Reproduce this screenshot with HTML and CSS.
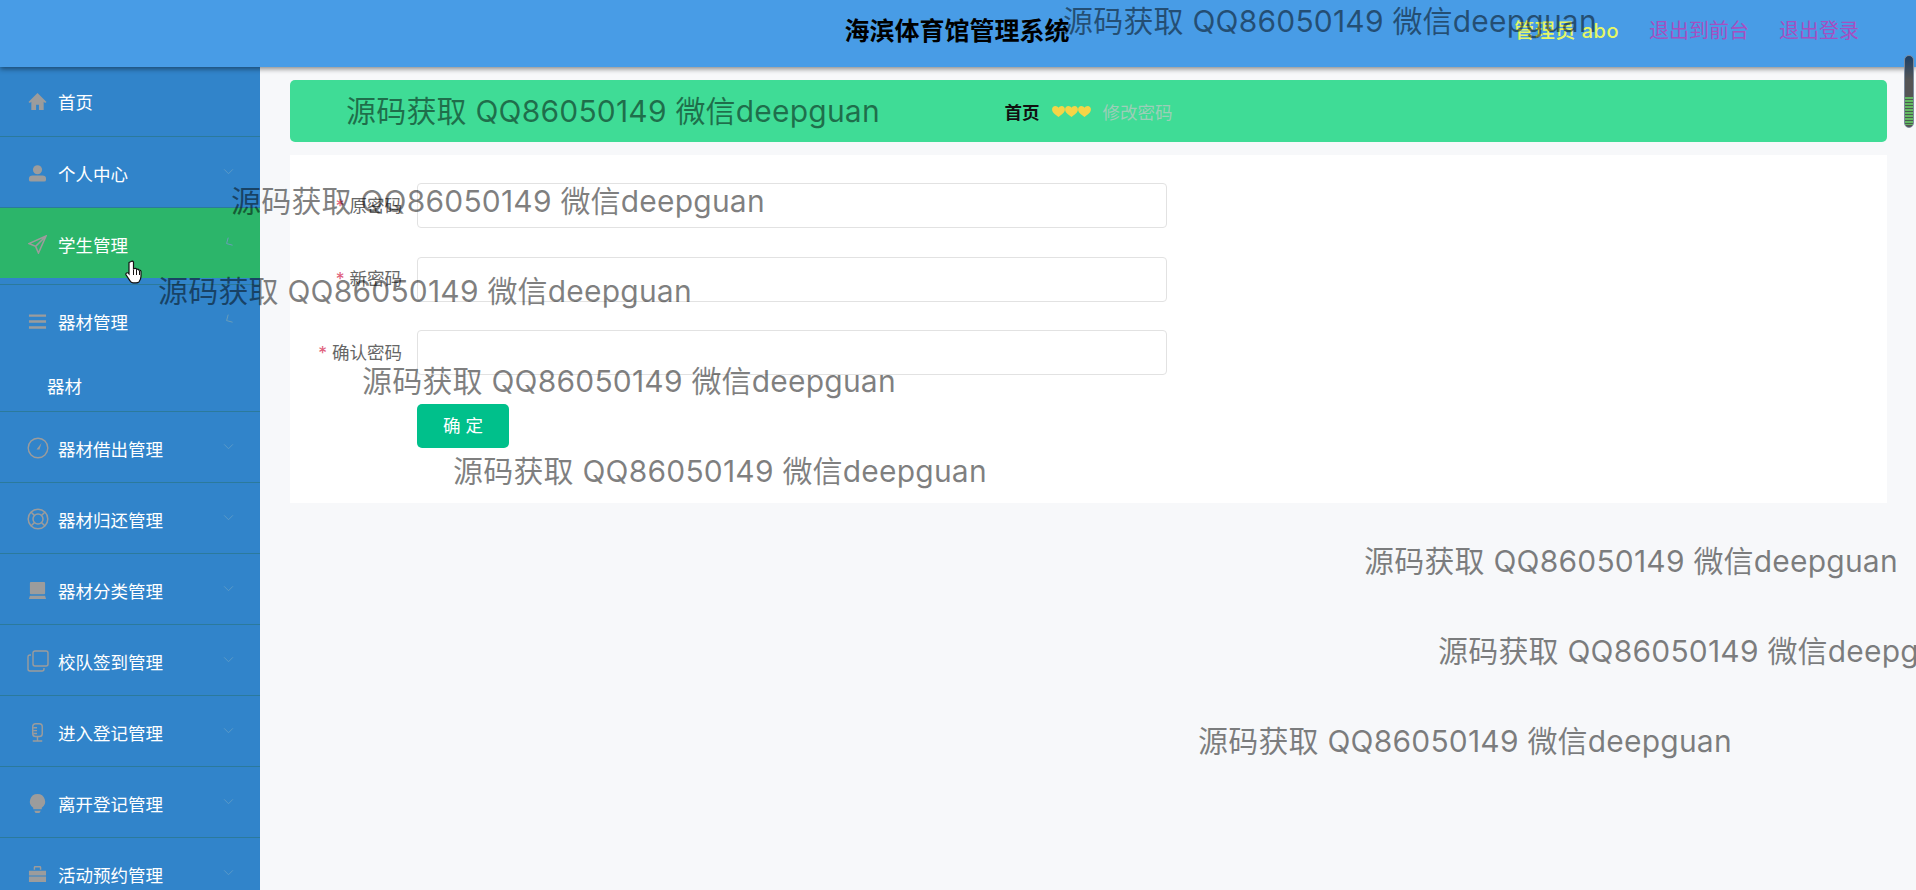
FILE: index.html
```html
<!DOCTYPE html>
<html lang="zh-CN">
<head>
    <meta charset="UTF-8">
    <meta name="viewport" content="width=device-width, initial-scale=1.0">
    <title>海滨体育馆管理系统</title>
    <link rel="stylesheet" href="styles.css">
</head>
<body>
    <svg class="defs" width="0" height="0">
        <symbol id="chev" viewBox="0 0 12 8"><path d="M1 1.500l5 5 5-5" fill="none" stroke="currentColor" stroke-width="1"/></symbol>
        <symbol id="heart" viewBox="0 0 14 12"><path d="M7 12C3 9 0 7 0 3.500 0 1.500 1.500 0 3.500 0 5 0 6.300 .8 7 2c.7-1.200 2-2 3.500-2C12.500 0 14 1.500 14 3.500 14 7 11 9 7 12z"/></symbol>
    </svg>

    <header class="top-bar">
        <div></div>
        <h1 class="app-title">海滨体育馆管理系统</h1>
        <div class="top-links">
            <span class="user">管理员 abo</span>
            <a class="link">退出到前台</a>
            <a class="link">退出登录</a>
        </div>
    </header>

    <div class="layout">
        <nav class="sidebar">
            <div class="menu-item first">
                <svg class="icon" viewBox="0 0 20 20"><path d="M10 1L0.500 10.500l1.500 1 1.500-1.200V19h5v-5.500h3V19h5v-8.700l1.500 1.200 1.500-1z"/></svg>
                <span>首页</span>
            </div>
            <div class="menu-item">
                <svg class="icon" viewBox="0 0 20 20"><circle cx="10" cy="6" r="4.800"/><path d="M1 15.500q0-3.500 4-3.500h10q4 0 4 3.500v1q0 2-2 2H3q-2 0-2-2z"/></svg>
                <span>个人中心</span>
                <svg class="chev"><use href="#chev"/></svg>
            </div>
            <div class="menu-group">
                <div class="menu-item active">
                    <svg class="icon" viewBox="0 0 20 20"><path d="M19 1L1 9l7 3 3 7zM8 12L19 1" fill="none" stroke="currentColor" stroke-width="1.600"/></svg>
                    <span>学生管理</span>
                    <svg class="chev half"><use href="#chev"/></svg>
                </div>
                <div class="menu-gap"></div>
            </div>
            <div class="menu-group">
                <div class="menu-item">
                    <svg class="icon" viewBox="0 0 20 20"><path d="M1 2.500h18v2.500H1zM1 8.800h18v2.500H1zM1 15h18v2.500H1z"/></svg>
                    <span>器材管理</span>
                    <svg class="chev half"><use href="#chev"/></svg>
                </div>
                <div class="sub-item">器材</div>
            </div>
            <div class="menu-item">
                <svg class="icon wide" viewBox="0 0 22 22"><circle cx="11" cy="11" r="9.800" fill="none" stroke="currentColor" stroke-width="1.400"/><path d="M14.500 6l-2 6.500h-3z"/></svg>
                <span>器材借出管理</span>
                <svg class="chev"><use href="#chev"/></svg>
            </div>
            <div class="menu-item">
                <svg class="icon wide" viewBox="0 0 22 22"><g fill="none" stroke="currentColor" stroke-width="1.500"><circle cx="11" cy="11" r="9.800"/><circle cx="11" cy="11" r="5"/><path d="M4 4l3.500 3.500M18 4l-3.500 3.500M4 18l3.500-3.500M18 18l-3.500-3.500"/></g></svg>
                <span>器材归还管理</span>
                <svg class="chev"><use href="#chev"/></svg>
            </div>
            <div class="menu-item">
                <svg class="icon" viewBox="0 0 20 20"><path d="M3 1h14q1 0 1 1v11q0 1-1 1H3q-1 0-1-1V2q0-1 1-1zM2 15.500h16l1 3.500H1z"/></svg>
                <span>器材分类管理</span>
                <svg class="chev"><use href="#chev"/></svg>
            </div>
            <div class="menu-item">
                <svg class="icon wide" viewBox="0 0 22 22"><g fill="none" stroke="currentColor" stroke-width="1.400"><rect x="6" y="1" width="15" height="15" rx="2"/><path d="M4 5H3q-2 0-2 2v12q0 2 2 2h12q2 0 2-2v-1"/></g></svg>
                <span>校队签到管理</span>
                <svg class="chev"><use href="#chev"/></svg>
            </div>
            <div class="menu-item">
                <svg class="icon" viewBox="0 0 20 20"><g fill="none" stroke="currentColor" stroke-width="1.500"><rect x="5" y="0.800" width="10" height="13.500" rx="3"/><path d="M5.500 5h4M5.500 8h4M5.500 11h4M10 14.500v4M5 19h10"/></g></svg>
                <span>进入登记管理</span>
                <svg class="chev"><use href="#chev"/></svg>
            </div>
            <div class="menu-item">
                <svg class="icon" viewBox="0 0 20 20"><path d="M10 0a8 8 0 0 1 4.500 14.600V16h-9v-1.400A8 8 0 0 1 10 0zM6.500 17.500h7L12 20H8z"/></svg>
                <span>离开登记管理</span>
                <svg class="chev"><use href="#chev"/></svg>
            </div>
            <div class="menu-item">
                <svg class="icon" viewBox="0 0 20 20"><path d="M6 5V2.500Q6 1 7.500 1h5Q14 1 14 2.500V5h-1.500V2.500h-5V5zM1 6h18v5H1zM1 12h18v6H1z"/></svg>
                <span>活动预约管理</span>
                <svg class="chev"><use href="#chev"/></svg>
            </div>
        </nav>

        <main class="content">
            <div class="crumb-bar">
                <b class="crumb-home">首页</b>
                <span class="hearts">
                    <svg><use href="#heart"/></svg>
                    <svg><use href="#heart"/></svg>
                    <svg><use href="#heart"/></svg>
                </span>
                <span class="crumb-page">修改密码</span>
            </div>

            <form class="form-panel">
                <div class="form-row">
                    <label><i>*</i> 原密码</label>
                    <input class="field" type="password">
                </div>
                <div class="form-row">
                    <label><i>*</i> 新密码</label>
                    <input class="field" type="password">
                </div>
                <div class="form-row">
                    <label><i>*</i> 确认密码</label>
                    <input class="field" type="password">
                </div>
                <button class="submit-btn" type="button">确 定</button>
            </form>
        </main>
    </div>

    <div class="scroll-thumb"></div>

    <svg class="hand" viewBox="0 0 18 24"><path d="M6 1.500q1.500-1 2.500 0.500v7l1-.5q1.500-.5 2 .5l.2.500q1.500-.7 2 .3l.3.500q1.500-.5 2 1v5q0 3-2 5.500-1 1-3 1H8q-2 0-3-2l-4-6q-.5-1.500 1-2 1-.3 2 1V2.500z" fill="#fff" stroke="#111" stroke-width="1.200"/><path d="M8.500 10v5M11.500 10v5M14.500 11v4" stroke="#111" fill="none"/></svg>

    <div class="wm wm-1">源码获取 QQ86050149 微信deepguan</div>
    <div class="wm wm-2">源码获取 QQ86050149 微信deepguan</div>
    <div class="wm wm-3">源码获取 QQ86050149 微信deepguan</div>
    <div class="wm wm-4">源码获取 QQ86050149 微信deepguan</div>
    <div class="wm wm-5">源码获取 QQ86050149 微信deepguan</div>
    <div class="wm wm-6">源码获取 QQ86050149 微信deepguan</div>
    <div class="wm wm-7">源码获取 QQ86050149 微信deepguan</div>
    <div class="wm wm-8">源码获取 QQ86050149 微信deepguan</div>
    <div class="wm wm-9">源码获取 QQ86050149 微信deepguan</div>
</body>
</html>
```

FILE: styles.css
```css
* {
    box-sizing: border-box;
}

html, body {
    height: 100%;
}

body {
    margin: 0;
    position: relative;
    overflow: hidden;
    background: #f7f8fa;
    font-family: Inter, "Noto Sans CJK SC", sans-serif;
    font-size: 17.5px;
    color: #666;
}

.defs {
    position: absolute;
}

.top-bar {
    position: relative;
    z-index: 2;
    display: grid;
    grid-template-columns: 1fr auto 1fr;
    align-items: center;
    height: 67px;
    padding-bottom: 9px;
    background: #489ce6;
    box-shadow: 0 2px 5px rgba(0, 0, 0, 0.45);
}

.app-title {
    margin: 0 2px 0 0;
    font-size: 25px;
    font-weight: bold;
    color: #000;
}

.top-links {
    display: flex;
    justify-content: flex-end;
    gap: 30px;
    padding-right: 57px;
    font-size: 20px;
}

.user {
    color: #e6f763;
    font-weight: 500;
    letter-spacing: 0.5px;
}

.link {
    color: #a54fc2;
}

.layout {
    display: flex;
    height: 823px;
}

.sidebar {
    flex: none;
    width: 260px;
    background: #3184ca;
    color: #fff;
}

.menu-item {
    display: flex;
    align-items: center;
    position: relative;
    height: 71px;
    padding: 2px 0 0 26px;
    border-bottom: 1px solid #2b7a9c;
}

.menu-item.first {
    height: 70px;
    padding-top: 0;
}

.menu-group {
    border-bottom: 1px solid #2b7a9c;
}

.menu-group .menu-item {
    height: 70px;
    border-bottom: none;
}

.menu-item.active {
    background: #2cb56a;
}

.menu-gap {
    height: 6px;
}

.sub-item {
    display: flex;
    align-items: center;
    height: 56px;
    padding: 4px 0 0 47px;
}

.icon {
    flex: none;
    width: 19px;
    height: 19px;
    margin: 0 11px 0 2px;
    fill: #9c9c9c;
    color: #9c9c9c;
}

.icon.wide {
    width: 22px;
    height: 22px;
    margin: 0 9px 0 1px;
}

.chev {
    position: absolute;
    right: 26px;
    top: 31px;
    width: 11px;
    height: 7px;
    color: #5f9bc7;
}

.chev.half {
    transform: rotate(60deg);
    color: #6b9db8;
}

.content {
    flex: 1;
    padding: 13px 29px 0 30px;
}

.crumb-bar {
    display: flex;
    align-items: center;
    justify-content: center;
    height: 62px;
    border-radius: 5px;
    background: #3fdc96;
}

.crumb-home {
    color: #111;
}

.hearts {
    display: flex;
    margin: 0 12px;
}

.hearts svg {
    width: 13px;
    height: 11px;
    fill: #f5d547;
}

.crumb-page {
    color: #9cceb8;
}

.form-panel {
    height: 348px;
    margin-top: 13px;
    padding: 28px 0 0 127px;
    background: #fff;
}

.form-row {
    display: flex;
    align-items: center;
    margin-bottom: 28.5px;
}

.form-row label {
    flex: none;
    width: 127px;
    margin-left: -127px;
    padding: 0 15px 3px 0;
    text-align: right;
    color: #666;
}

.form-row label i {
    font-style: normal;
    color: #e0607c;
}

.field {
    width: 750px;
    height: 45px;
    border: 1px solid #e2e2e2;
    border-radius: 4px;
    background: #fff;
}

.submit-btn {
    display: block;
    width: 92px;
    height: 44px;
    padding-bottom: 4px;
    border: none;
    border-radius: 5px;
    background: #00c08b;
    color: #fff;
    font-family: inherit;
    font-size: 17.5px;
}

.scroll-thumb {
    position: absolute;
    left: 1904px;
    top: 55px;
    width: 10px;
    height: 73px;
    border-radius: 5px;
    border: 1px solid #7c8a9c;
    background:
        repeating-linear-gradient(#62b862 0 2px, #4a5c50 2px 3px) 0 41px / 100% 28px no-repeat,
        linear-gradient(#1c3f66 0, #555 24px, #555 100%);
    z-index: 4;
}

.hand {
    position: absolute;
    left: 125px;
    top: 260px;
    width: 18px;
    height: 24px;
    z-index: 5;
}

.wm {
    position: absolute;
    z-index: 3;
    font-size: 30px;
    line-height: 40px;
    letter-spacing: 0.2px;
    white-space: nowrap;
    color: rgba(0, 0, 0, 0.5);
}

.wm-1 { left: 1063px; top: 1px; }
.wm-2 { left: 346px; top: 91px; }
.wm-3 { left: 231px; top: 181px; }
.wm-4 { left: 158px; top: 271px; }
.wm-5 { left: 362px; top: 361px; }
.wm-6 { left: 453px; top: 451px; }
.wm-7 { left: 1364px; top: 541px; }
.wm-8 { left: 1438px; top: 631px; }
.wm-9 { left: 1198px; top: 721px; }
```
